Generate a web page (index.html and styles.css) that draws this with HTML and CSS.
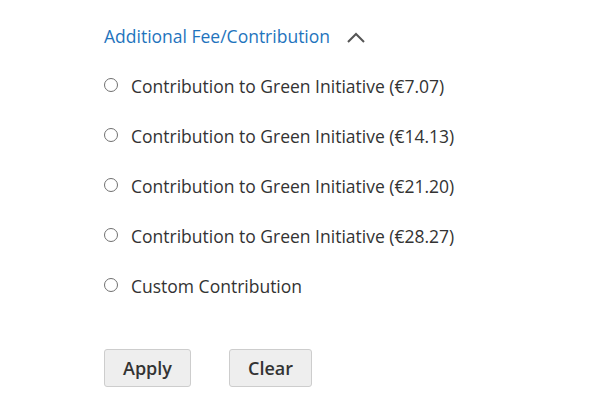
FILE: index.html
```html
<!DOCTYPE html>
<html>
<head>
<meta charset="utf-8">
<link rel="stylesheet" href="styles.css">
</head>
<body>
<div class="panel">
  <div class="title-row">
    <span class="title">Additional Fee/Contribution</span>
    <svg class="chevron" width="18" height="11" viewBox="0 0 18 11"><path d="M1 10 L9 2 L17 10" fill="none" stroke="#555" stroke-width="2"/></svg>
  </div>
  <ul class="options">
    <li class="option"><span class="radio"></span><span class="label">Contribution to Green Initiative (€7.07)</span></li>
    <li class="option"><span class="radio"></span><span class="label">Contribution to Green Initiative (€14.13)</span></li>
    <li class="option"><span class="radio"></span><span class="label">Contribution to Green Initiative (€21.20)</span></li>
    <li class="option"><span class="radio"></span><span class="label">Contribution to Green Initiative (€28.27)</span></li>
    <li class="option"><span class="radio"></span><span class="label">Custom Contribution</span></li>
  </ul>
  <div class="actions">
    <button class="btn btn-apply">Apply</button>
    <button class="btn btn-clear">Clear</button>
  </div>
</div>
</body>
</html>
```
FILE: styles.css
```css
html, body {
  margin: 0;
  padding: 0;
  background: #fff;
}
body {
  font-family: "Open Sans", "Liberation Sans", sans-serif;
  color: #333;
}
.panel {
  padding: 24px 0 0 104px;
}
.title-row {
  display: flex;
  align-items: center;
  gap: 17px;
  height: 24px;
}
.title {
  font-size: 17.5px;
  color: #1f74bd;
}
.chevron {
  display: block;
  margin-top: 2px;
}
.options {
  list-style: none;
  margin: 0;
  padding: 0;
  margin-top: 13px;
}
.option {
  display: flex;
  align-items: center;
  height: 50px;
}
.radio {
  width: 12px;
  height: 12px;
  border: 1px solid #707070;
  border-radius: 50%;
  box-sizing: content-box;
  margin-right: 13px;
  margin-top: -3px;
}
.label {
  font-size: 17.5px;
  color: #333;
}
.actions {
  display: flex;
  gap: 38px;
  margin-top: 38px;
}
.btn {
  font-family: "Open Sans", "Liberation Sans", sans-serif;
  font-weight: 600;
  font-size: 18px;
  color: #333;
  background: #eee;
  border: 1px solid #cdcdcd;
  border-radius: 3px;
  height: 38px;
  padding: 0 18px;
  cursor: pointer;
}
```
